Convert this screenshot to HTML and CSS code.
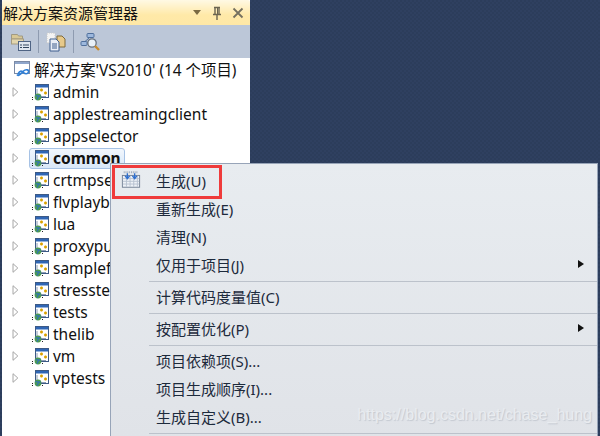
FILE: index.html
```html
<!DOCTYPE html>
<html lang="zh">
<head>
<meta charset="utf-8">
<title>解决方案资源管理器</title>
<link rel="stylesheet" href="styles.css">
</head>
<body>
<svg class="defs" width="0" height="0" aria-hidden="true">
  <symbol id="proj" viewBox="0 0 17 17">
    <rect x="3.500" y="0.500" width="13" height="13" fill="#fff" stroke="#3d5a86"/>
    <rect x="4" y="1" width="12" height="2.500" fill="#2f66b5"/>
    <path d="M8 6h3M9.500 4.500v3M12 9h3M13.500 7.500v3" stroke="#d9a100" stroke-width="1.600"/>
    <path d="M5 5v5M14 12.500H9" stroke="#8e9db3"/>
    <circle cx="6" cy="13" r="3.400" fill="#4c9a52"/>
    <path d="M3.500 12c1.500-1 2.500.5 5 0M5 15.500l2-4" stroke="#2f6fc0" stroke-width="1.100" fill="none"/>
    <path d="M0 15.500h2M10 15.500h2M0 13.500h1" stroke="#222" stroke-dasharray="1 1"/>
  </symbol>
  <symbol id="tri" viewBox="0 0 7 10">
    <path d="M1 .7L5.800 5 1 9.300Z" fill="#fff" stroke="#a6a6a6"/>
  </symbol>
</svg>
<main class="explorer">
  <header class="titlebar">
    <span class="title">解决方案资源管理器</span>
    <span class="controls">
      <svg width="10" height="6" viewBox="0 0 10 6"><path d="M1 0h8L5 5Z" fill="#7b6a42"/></svg>
      <svg width="12" height="14" viewBox="0 0 12 14"><path d="M3 1.500h6M4 2v6M8 2v6M2 8.500h8M6 9v5" stroke="#6b6450" stroke-width="1.400" fill="none"/><path d="M6.500 2v6" stroke="#6b6450"/></svg>
      <svg width="12" height="12" viewBox="0 0 12 12"><path d="M1.500 1.500l9 9M10.500 1.500l-9 9" stroke="#75705f" stroke-width="1.800"/></svg>
    </span>
  </header>
  <div class="toolbar">
    <svg class="tool" width="22" height="20" viewBox="0 0 22 20">
      <path d="M1.500 2.500h6l1 1.500h4v3h-11Z" fill="#d8c896" stroke="#a09a84"/>
      <rect x="1.500" y="7" width="12" height="5" fill="#e2d6ae" stroke="#a59c80"/>
      <rect x="8.500" y="9.500" width="12" height="9" fill="#dfe6f0" stroke="#4f6484"/>
      <path d="M10 13h2M10 15.500h2M13 13h6M13 15.500h6" stroke="#33475f"/>
    </svg>
    <span class="sep"></span>
    <svg class="tool" width="22" height="20" viewBox="0 0 22 20">
      <path d="M2 1h8v10H2Z" fill="#f4f4f4" stroke="#c9c9c9" stroke-dasharray="1 1"/>
      <path d="M12 4h5l3 3v8h-8Z" fill="#e7c98a" stroke="#7f6a3c"/>
      <path d="M5 7h6l3 3v9H5Z" fill="#e9eef6" stroke="#3f5f8e"/>
      <path d="M7 12h5M7 14h5M7 16h5" stroke="#3f5f8e"/>
    </svg>
    <span class="sep"></span>
    <svg class="tool" width="22" height="20" viewBox="0 0 22 20">
      <rect x="7" y="1.500" width="7" height="4" rx="1" fill="#9db8dd" stroke="#4f6f9c"/>
      <rect x="1" y="9.500" width="6" height="4" rx="1" fill="#9db8dd" stroke="#4f6f9c"/>
      <path d="M9 6L5 9.500" stroke="#4f6f9c"/>
      <circle cx="12" cy="11" r="4.200" fill="#e9f0f7" stroke="#66717f" stroke-width="1.300"/>
      <path d="M15 14l4 4" stroke="#c98a2c" stroke-width="2.400"/>
    </svg>
  </div>
  <div class="tree">
    <div class="root">
      <svg width="18" height="16" viewBox="0 0 18 16">
        <rect x="0.500" y="0.500" width="15" height="12" fill="#fff" stroke="#7b8aa5"/>
        <rect x="1" y="1" width="14" height="2" fill="#8fa6cb"/>
        <path d="M4 13c2-4 4-3 5.500-1.500s4 2 5-.5-3-3-5-1-5 6-6.500 3.500" stroke="#2f7fd6" stroke-width="1.700" fill="none"/>
      </svg>
      <span>解决方案'VS2010' (14 个项目)</span>
    </div>
    <div class="row"><svg class="tri"><use href="#tri"/></svg><svg class="pi"><use href="#proj"/></svg><span class="label">admin</span></div>
    <div class="row"><svg class="tri"><use href="#tri"/></svg><svg class="pi"><use href="#proj"/></svg><span class="label">applestreamingclient</span></div>
    <div class="row"><svg class="tri"><use href="#tri"/></svg><svg class="pi"><use href="#proj"/></svg><span class="label">appselector</span></div>
    <div class="row"><svg class="tri"><use href="#tri"/></svg><span class="selected"><svg class="pi"><use href="#proj"/></svg><span class="label bold">common</span></span></div>
    <div class="row"><svg class="tri"><use href="#tri"/></svg><svg class="pi"><use href="#proj"/></svg><span class="label">crtmpserver</span></div>
    <div class="row"><svg class="tri"><use href="#tri"/></svg><svg class="pi"><use href="#proj"/></svg><span class="label">flvplayback</span></div>
    <div class="row"><svg class="tri"><use href="#tri"/></svg><svg class="pi"><use href="#proj"/></svg><span class="label">lua</span></div>
    <div class="row"><svg class="tri"><use href="#tri"/></svg><svg class="pi"><use href="#proj"/></svg><span class="label">proxypublish</span></div>
    <div class="row"><svg class="tri"><use href="#tri"/></svg><svg class="pi"><use href="#proj"/></svg><span class="label">samplefactory</span></div>
    <div class="row"><svg class="tri"><use href="#tri"/></svg><svg class="pi"><use href="#proj"/></svg><span class="label">stresstest</span></div>
    <div class="row"><svg class="tri"><use href="#tri"/></svg><svg class="pi"><use href="#proj"/></svg><span class="label">tests</span></div>
    <div class="row"><svg class="tri"><use href="#tri"/></svg><svg class="pi"><use href="#proj"/></svg><span class="label">thelib</span></div>
    <div class="row"><svg class="tri"><use href="#tri"/></svg><svg class="pi"><use href="#proj"/></svg><span class="label">vm</span></div>
    <div class="row"><svg class="tri"><use href="#tri"/></svg><svg class="pi"><use href="#proj"/></svg><span class="label">vptests</span></div>
  </div>
</main>
<nav class="menu">
  <div class="item">
    <svg class="build" width="20" height="19" viewBox="0 0 22 20">
      <rect x="1.500" y="5.500" width="19" height="13" fill="#eef2f7" stroke="#6f7d92"/>
      <path d="M2 9h18M2 12h18M2 15h18M6 6v12M10 6v12M14 6v12M18 6v12" stroke="#b6c0cf"/>
      <path d="M3 2h16" stroke="#9aa6b8" stroke-width="2" stroke-dasharray="1 1"/>
      <path d="M7 3v5M4.500 6L7 9l2.500-3M15 3v5M12.500 6L15 9l2.500-3" stroke="#2d6fd0" stroke-width="1.500" fill="none"/>
    </svg>
    <span>生成(U)</span>
  </div>
  <div class="item"><span>重新生成(E)</span></div>
  <div class="item"><span>清理(N)</span></div>
  <div class="item sub"><span>仅用于项目(J)</span><i class="arrow"></i></div>
  <div class="rule"></div>
  <div class="item"><span>计算代码度量值(C)</span></div>
  <div class="rule"></div>
  <div class="item sub"><span>按配置优化(P)</span><i class="arrow"></i></div>
  <div class="rule"></div>
  <div class="item"><span>项目依赖项(S)...</span></div>
  <div class="item"><span>项目生成顺序(I)...</span></div>
  <div class="item"><span>生成自定义(B)...</span></div>
  <div class="rule"></div>
  <div class="highlight"></div>
  <div class="watermark">https://blog.csdn.net/chase_hung</div>
</nav>
</body>
</html>
```
FILE: styles.css
```css
* { box-sizing: border-box; }
html, body { height: 100%; }
body {
  margin: 0;
  height: 436px;
  overflow: hidden;
  position: relative;
  padding-left: 2px;
  background-color: #2c3d5b;
  background-image:
    linear-gradient(45deg, #2f4060 25%, transparent 25%, transparent 75%, #2f4060 75%),
    linear-gradient(45deg, #2f4060 25%, transparent 25%, transparent 75%, #2f4060 75%);
  background-size: 4px 4px;
  background-position: 0 0, 2px 2px;
  font-family: "Noto Sans", "Noto Sans CJK SC", sans-serif;
  color: #111;
}
.defs { position: absolute; }
.explorer {
  width: 248px;
  height: 436px;
  display: flex;
  flex-direction: column;
  background: #fff;
}
.titlebar {
  height: 25px;
  display: flex;
  align-items: center;
  justify-content: space-between;
  padding: 0 6px 0 1px;
  background: linear-gradient(#fff9e4, #ffe9a8 60%, #ffe8a6);
  border-radius: 2px 2px 0 0;
  flex: none;
}
.title { font-size: 15px; color: #111; line-height: 24px; }
.controls { display: flex; align-items: center; gap: 9px; }
.toolbar {
  height: 33px;
  flex: none;
  display: flex;
  align-items: center;
  padding-left: 8px;
  gap: 6px;
  background: #bcc7d8;
}
.tool { display: block; }
.sep { width: 1px; height: 23px; background: #8e9bb0; }
.tree { flex: 1; padding-top: 1px; overflow: hidden; }
.root {
  height: 22px;
  display: flex;
  align-items: center;
  gap: 2px;
  padding: 0 0 2px 12px;
  font-size: 15.400px;
  white-space: nowrap;
}
.row {
  height: 22px;
  display: flex;
  align-items: center;
  padding-left: 10px;
  font-size: 15.500px;
  white-space: nowrap;
}
.tri { width: 7px; height: 10px; margin-right: 13px; flex: none; }
.pi { width: 17px; height: 17px; margin: 0 4px 0 0; flex: none; }
.selected {
  display: flex;
  align-items: center;
  height: 21px;
  margin-left: -3px;
  padding: 0 3px 0 2px;
  border: 1px solid #a6c2e5;
  border-radius: 3px;
  background: linear-gradient(#f2f7fd, #d8e7f8);
}
.label { line-height: 20px; }
.bold { font-weight: 700; }
.menu {
  position: absolute;
  left: 110px;
  top: 163px;
  width: 488px;
  height: 273px;
  padding-top: 3px;
  border: 1px solid #97a4b8;
  border-bottom: 0;
  background: linear-gradient(#e8ecf0, #e0e3e8);
  font-size: 15px;
  color: #1d2a3c;
}
.item {
  height: 28px;
  display: flex;
  align-items: center;
  padding: 0 0 2px 45px;
  position: relative;
}
.build { position: absolute; left: 10px; top: 3px; }
.sub { justify-content: space-between; padding-right: 13px; }
.arrow {
  width: 0;
  height: 0;
  border-left: 6px solid #111;
  border-top: 4.500px solid transparent;
  border-bottom: 4.500px solid transparent;
}
.rule { height: 1px; margin: 1.500px 0 1.500px 38px; background: #bcc2cb; }
.highlight {
  position: absolute;
  left: 1px;
  top: 1px;
  width: 110px;
  height: 34px;
  border: 3px solid #ef3b3b;
}
.watermark {
  position: absolute;
  right: 5px;
  top: 242px;
  font-family: "Liberation Sans", sans-serif;
  font-size: 16px;
  color: #e9ecf0;
  text-shadow: 1px 1px 1px #c3c8d0;
}
```
